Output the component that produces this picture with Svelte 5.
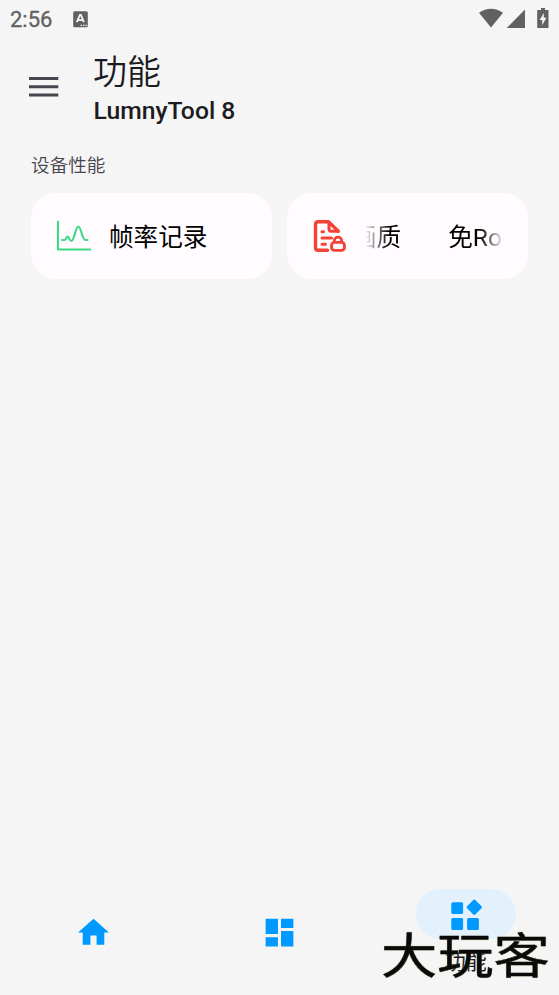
<script>
  let active = 'tools';

  const tabs = [
    { id: 'home', label: '主页' },
    { id: 'dashboard', label: '概览' },
    { id: 'tools', label: '功能' }
  ];
</script>

<div class="screen">
  <div class="status">
    <span class="time">2:56</span>
    <svg class="badge" width="16" height="17" viewBox="0 0 16 17">
      <rect x="0.2" y="0.2" width="14.6" height="16" rx="1.5" fill="#616161" />
      <path d="M3.8 11.2 6.9 4h1L10.9 11.2M5 9.1h4.8" fill="none" stroke="#f5f5f5" stroke-width="1.8" />
      <path d="M7.6 14.4h1.5m1 0h1.4m1 0h1.3" stroke="#f5f5f5" stroke-width="1.2" />
    </svg>
    <svg class="signals" width="72" height="22" viewBox="0 0 72 22">
      <g fill="#616161">
        <path d="M0 4.8Q12 -3.2 24 4.8L12 19.4Z" />
        <path d="M46 1.5V20H27.8Z" />
        <path d="M62 0h4v2h3.5v18H58.2V2H62z" />
      </g>
      <path d="M64.8 5 60.6 12h2.6v5.2l4.2-7.4h-2.6z" fill="#f5f5f5" />
    </svg>
  </div>

  <header>
    <svg class="menu" width="30" height="20" viewBox="0 0 30 20">
      <path d="M0 1.5h29.3M0 9.7h29.3M0 18h29.3" stroke="#49454f" stroke-width="3" />
    </svg>
    <div>
      <h1>功能</h1>
      <p class="subtitle">LumnyTool 8</p>
    </div>
  </header>

  <main>
    <h2>设备性能</h2>
    <div class="cards">
      <button class="card">
        <svg width="36" height="36" viewBox="0 0 36 36" fill="none" stroke="#3ddc84" stroke-width="2.1" stroke-linecap="round" stroke-linejoin="round">
          <path d="M2 3.5V31.5H34.3" />
          <path d="M6 22H8.5C10 22 10.3 18.5 11.7 18.5S13.3 23 15.3 23C18.5 23 19.5 8.5 22.3 8.5S26 22 29.5 22H31.5" />
        </svg>
        <span class="name">帧率记录</span>
      </button>
      <button class="card">
        <svg width="36" height="36" viewBox="0 0 36 36" fill="none" stroke="#f44336" stroke-width="3.4" stroke-linecap="round" stroke-linejoin="round">
          <path d="M15.5 32.3H6.3Q3.5 32.3 3.5 29.5V6.6Q3.5 3.8 6.3 3.8H16.5L26.3 13.2" />
          <path d="M17 4.5V11Q17 13.3 19.3 13.3H26M10 13.7H11.5M10 20H19.5M10 26.3H13.5" stroke-width="3" />
          <rect x="19.6" y="24.4" width="12.8" height="8" rx="2.8" stroke-width="2.9" />
          <path d="M22.3 24V22.8A3.7 3.7 0 0 1 29.7 22.8V24" stroke-width="2.8" />
        </svg>
        <span class="name marquee"><span class="first">画质</span><span>免Root</span></span>
      </button>
    </div>
  </main>

  <nav>
    {#each tabs as tab (tab.id)}
      <button class="tab" class:active={active === tab.id} aria-label={tab.label} on:click={() => (active = tab.id)}>
        <span class="pill">
          {#if tab.id === 'home'}
            <svg width="37" height="37" viewBox="0 0 24 24"><path d="M10 20v-6h4v6h5v-8h3L12 3 2 12h3v8z" /></svg>
          {:else if tab.id === 'dashboard'}
            <svg width="37" height="37" viewBox="0 0 24 24"><path d="M3 13h8V3H3v10zm0 8h8v-6H3v6zm10 0h8V11h-8v10zm0-18v6h8V3h-8z" /></svg>
          {:else}
            <svg width="36" height="36" viewBox="0 0 36 36">
              <rect x="3.3" y="6.3" width="11.8" height="11.8" rx="1.5" />
              <rect x="3.3" y="22.1" width="11.8" height="11.8" rx="1.5" />
              <rect x="19.1" y="22.1" width="11.8" height="11.8" rx="1.5" />
              <rect x="20.5" y="5.4" width="11.6" height="11.6" rx="1.4" transform="rotate(45 26.3 11.2)" />
            </svg>
          {/if}
        </span>
        {#if active === tab.id}
          <span class="label">{tab.label}</span>
        {/if}
      </button>
    {/each}
  </nav>

  <div class="stamp">大玩客</div>
</div>

<style>
  :global(body) {
    background: #f5f5f5;
  }

  .screen {
    position: relative;
    display: flex;
    flex-direction: column;
    height: 995px;
    overflow: hidden;
    background: #f5f5f5;
    color: #1c1b1f;
    font-family: Roboto, 'Noto Sans CJK SC', sans-serif;
  }

  .status {
    display: flex;
    align-items: center;
    height: 38px;
    padding: 0 8px 0 10px;
    box-sizing: border-box;
  }

  .time {
    width: 63px;
    color: #616161;
    font-size: 22px;
    font-weight: 400;
    -webkit-text-stroke: 0.3px #616161;
    line-height: 38px;
    padding-top: 1px;
  }

  .signals {
    margin-left: auto;
  }

  header {
    display: flex;
    height: 114px;
    padding: 13px 0 0 29px;
    box-sizing: border-box;
  }

  .menu {
    margin: 26px 35px 0 0;
  }

  h1,
  h2,
  p {
    margin: 0;
    font-weight: 400;
  }

  h1 {
    margin-left: -1px;
    font-size: 34px;
    font-weight: 350;
    line-height: 42px;
  }

  .subtitle {
    margin-left: -0.5px;
    font-size: 24.7px;
    font-weight: 500;
    line-height: 35px;
  }

  main {
    flex: 1;
    padding: 0 31px;
  }

  h2 {
    color: #49454f;
    font-size: 18.6px;
    font-weight: 350;
    line-height: 28px;
    margin-bottom: 13px;
  }

  .cards {
    display: grid;
    grid-template-columns: 1fr 1fr;
    gap: 15px;
  }

  button {
    border: none;
    font-family: inherit;
    cursor: pointer;
  }

  .card {
    display: flex;
    align-items: center;
    height: 86px;
    min-width: 0;
    padding: 0 24px 0 25px;
    border-radius: 25px;
    background: #fffbff;
    color: #000;
    font-size: 24.6px;
    text-align: left;
  }

  .card svg {
    flex: none;
    margin-right: 17px;
  }

  .name {
    padding-top: 4px;
    line-height: 36px;
    white-space: nowrap;
  }

  .marquee {
    flex: 1;
    display: flex;
    gap: 47px;
    overflow: hidden;
    -webkit-mask-image: linear-gradient(to right, transparent, #000 24px, #000 calc(100% - 24px), transparent);
    mask-image: linear-gradient(to right, transparent, #000 24px, #000 calc(100% - 24px), transparent);
  }

  .first {
    margin-left: -13px;
  }

  nav {
    display: grid;
    grid-template-columns: repeat(3, 1fr);
    height: 124px;
  }

  .tab {
    display: flex;
    flex-direction: column;
    align-items: center;
    padding: 36px 0 0;
    background: none;
  }

  .tab.active {
    padding-top: 18px;
  }

  .pill {
    display: flex;
    align-items: center;
    justify-content: center;
    width: 100px;
    height: 50px;
    border-radius: 25px;
  }

  .active .pill {
    background: #e3f1fd;
  }

  .pill svg {
    fill: #0099ff;
  }

  .label {
    margin-top: 8px;
    color: #1c1b1f;
    font-size: 21px;
    line-height: 30px;
  }

  /* Site mark laid over the bottom corner */
  .stamp {
    position: absolute;
    left: 381px;
    bottom: 13px;
    color: #0a0a0a;
    font-family: 'Noto Sans CJK SC', sans-serif;
    font-size: 50px;
    font-weight: 400;
    line-height: 60px;
    white-space: nowrap;
    transform: scale(1.125, 0.96);
    transform-origin: left;
    -webkit-text-stroke: 0.5px #0a0a0a;
    text-shadow: 0 0 2px #d8d0a0;
    pointer-events: none;
  }
</style>
